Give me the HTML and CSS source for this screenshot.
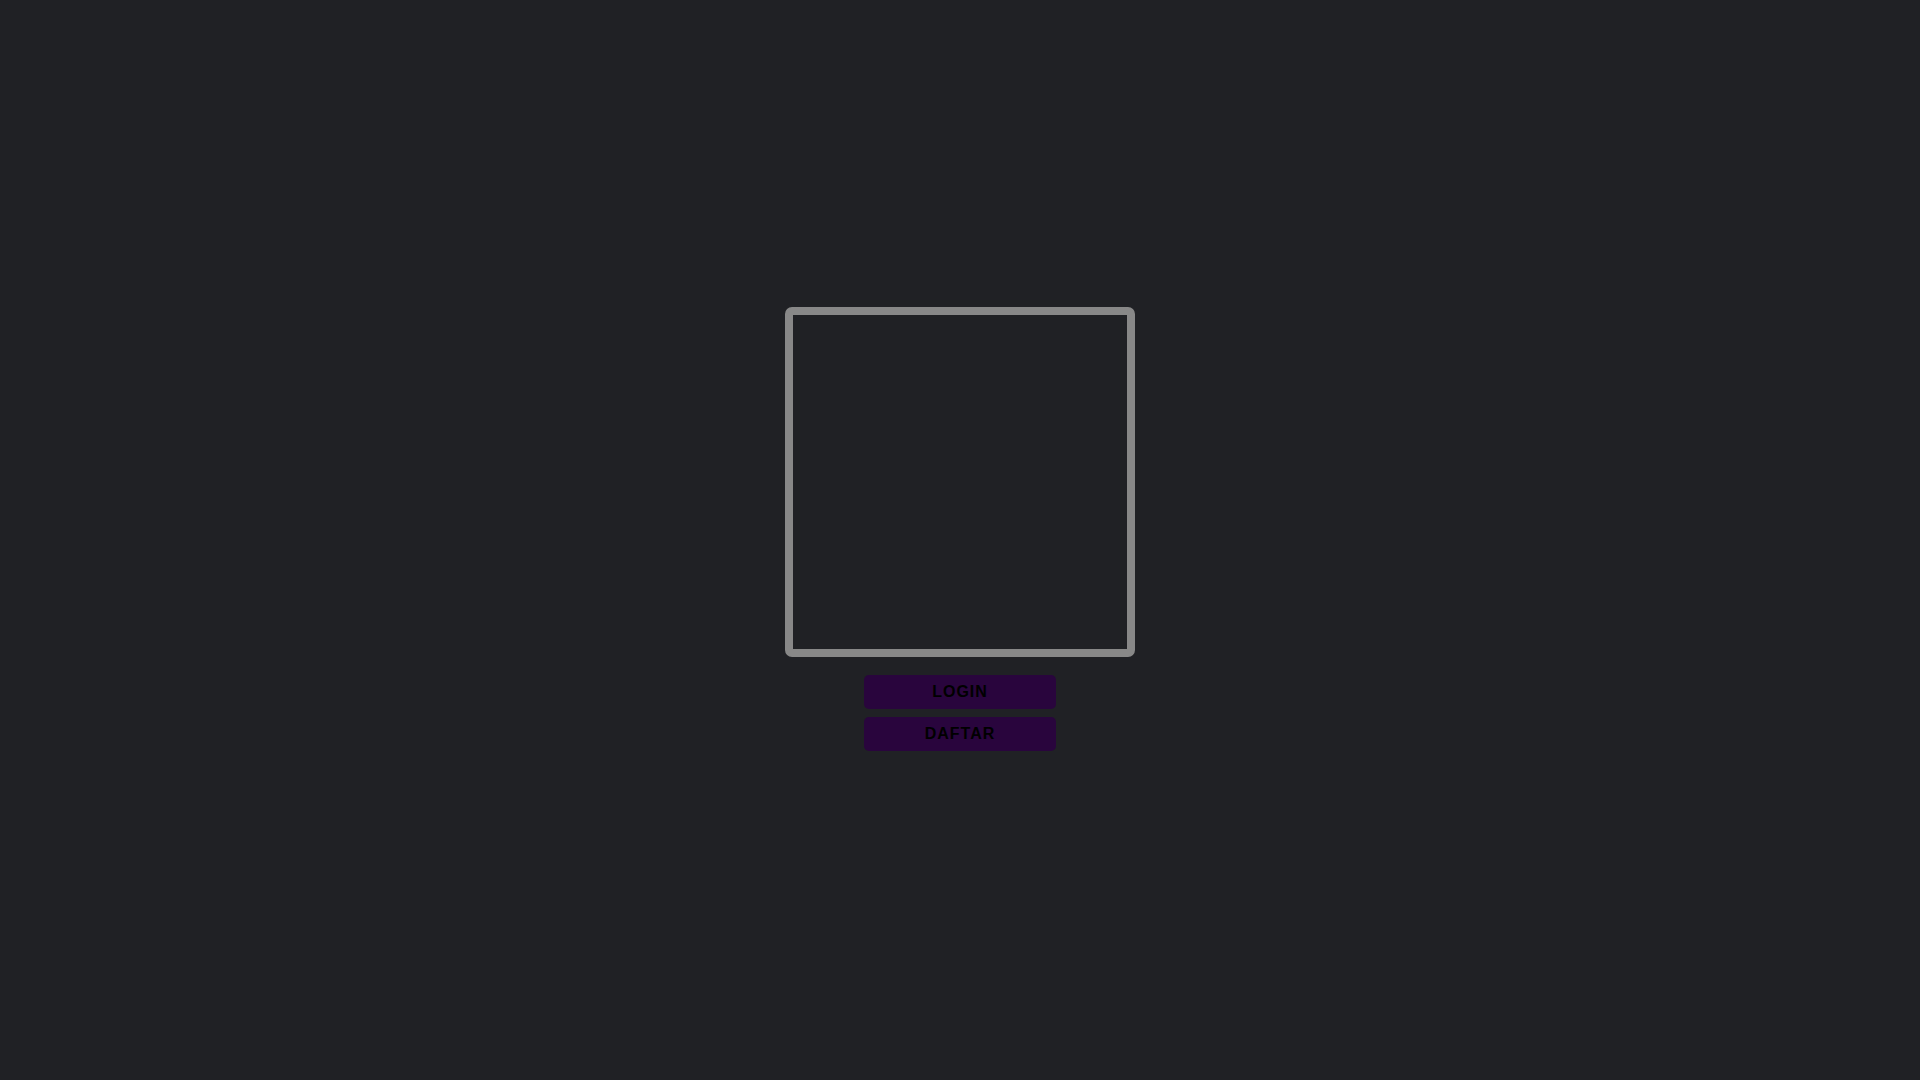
FILE: index.html
```html
<!DOCTYPE html>
<html lang="id">
<head>
<meta charset="utf-8">
<title>Login</title>
<link rel="stylesheet" href="styles.css">
</head>
<body>
<main class="page">
  <div class="frame"></div>
  <div class="actions">
    <button class="btn">LOGIN</button>
    <button class="btn">DAFTAR</button>
  </div>
</main>
</body>
</html>
```

FILE: styles.css
```css
html, body {
  margin: 0;
  padding: 0;
  height: 100%;
  background: #202125;
}
.page {
  height: 100%;
  box-sizing: border-box;
  padding-bottom: 22px;
  display: flex;
  flex-direction: column;
  align-items: center;
  justify-content: center;
}
.frame {
  width: 350px;
  height: 350px;
  box-sizing: border-box;
  border: 8px solid #888888;
  border-radius: 7px;
  background: #202125;
}
.actions {
  margin-top: 18px;
  display: flex;
  flex-direction: column;
  gap: 8px;
}
.btn {
  width: 192px;
  height: 34px;
  border: none;
  border-radius: 5px;
  background: #29053d;
  color: #000000;
  font-family: "Liberation Sans", Arial, sans-serif;
  font-weight: bold;
  font-size: 16px;
  letter-spacing: 1px;
  padding: 0;
  cursor: pointer;
}
```
